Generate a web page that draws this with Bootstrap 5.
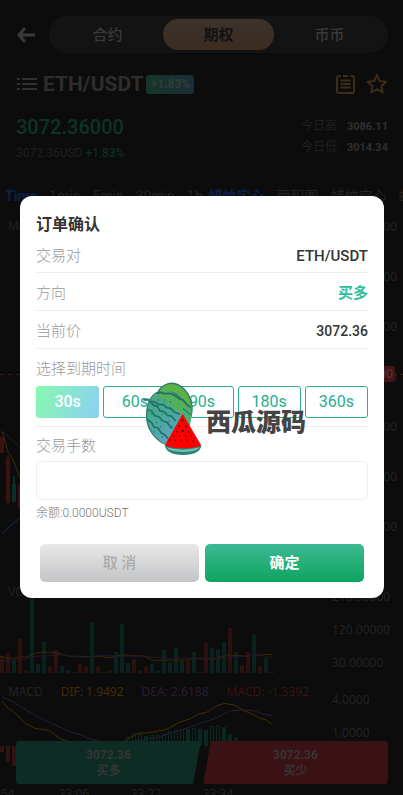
<!DOCTYPE html>
<html lang="zh-CN">
<head>
<meta charset="utf-8">
<meta name="viewport" content="width=device-width, initial-scale=1">
<title>ETH/USDT</title>
<link href="https://cdn.jsdelivr.net/npm/bootstrap@5.3.0/dist/css/bootstrap.min.css" rel="stylesheet">
<style>
body{background:#0c0c0c;color:#2b2b2b;font-family:Roboto,"Noto Sans CJK SC",sans-serif;font-size:12px;line-height:20px}
.page{height:100vh;overflow:hidden}
button{border:0;padding:0}
.top-bar{padding:16px 15px 0 16px}
.back{width:33px;background:none;text-align:left}
.seg{background:#131313;border-radius:19px;padding:3px}
.seg button{height:31px;border-radius:16px;background:none;color:#393939;font-size:15px;font-weight:500}
.seg .on{background:linear-gradient(#3b332d,#3c2c20);color:#111;font-weight:700}
.pair{padding:16px 15px 0 16px;height:46px}
.pair h1{font-size:21px;line-height:28px;font-weight:700;color:#2d2d2d;margin:0 3px 0 6px}
.chg{font-weight:700;color:#2f3d38;background:linear-gradient(90deg,#16362a,#1a2c36);border-radius:3px;width:48px;line-height:19px;text-align:center}
.quote{padding:16px 15px 0 16px;height:87px}
.big{font-size:20px;line-height:24px;font-weight:500;color:#0c3328}
.dimmer{color:#202020}
.up{color:#0c3328}
.hl{padding-top:1px}
.hl b{font-size:11px;color:#303030;margin-left:10px}
.frames{padding-left:5px;gap:6px;font-size:14px;color:#242424;white-space:nowrap;overflow:hidden}
.frames div{gap:12px}
.frames a{color:inherit;text-decoration:none}
.frames .sel{color:#0a2146}
.panel{display:grid;font-family:"Noto Sans",sans-serif;color:#232323;overflow:hidden;position:relative}
.panel>svg,.legend,.axis{grid-area:1/1}
.panel>svg{width:100%;height:100%}
.legend{padding-left:8px;gap:16px;font-size:12px;align-self:start}
.axis{justify-self:end;width:71px;line-height:33px}
.main-p{height:374px}.main-p .legend{padding-top:10px}
.main-p .axis{line-height:50px;margin-top:-4px}
.vol-p{height:100px}.vol-p .legend{padding-top:2px}
.macd-p{height:105px}.macd-p .legend{padding-top:2px;gap:18px}.macd-p .axis{padding-top:3px}
.dif{color:#432b05}.dea{color:#291b35}.hist{color:#371313}
.tag{position:absolute;right:8px;top:160px;background:#441313;color:#494040;line-height:16px;border-radius:2px;padding:0 2px}
.times{font-family:"Noto Sans",sans-serif;line-height:17px;color:#232323}
.times span{width:72px;flex:none;text-align:center}
.times span:first-child{width:54px;margin-left:-16px;text-align:left}
.trade{padding:0 15px 11px 16px;gap:2px}
.trade button{height:43px;line-height:16px;font-weight:700;color:#353535;border-radius:3px;flex:1}
.buy{background:#0c2c24;clip-path:polygon(0 0,100% 0,calc(100% - 8px) 100%,0 100%)}
.sell{background:#3a1115;clip-path:polygon(8px 0,100% 0,100% 100%,0 100%)}
.overlay{padding:0 19px 1px 20px;z-index:5}
.sheet{background:#fff;border-radius:12px;padding:16px;color:#999;font-size:15px}
.sheet h2{font-size:16px;line-height:26px;font-weight:700;color:#333;margin:0}
.sheet label,.lbl{font-weight:300;color:#999}
.line{height:38px;border-bottom:1px solid #eee;padding-top:2px}
.line.first{height:35px}
.line b{font-weight:500;color:#333}
.line .num{font-size:14px}
.line .long{color:#2ebd99;font-weight:700}
.pick{line-height:21px;padding:10px 0 6px}
.terms{gap:4px;padding-bottom:8px;border-bottom:1px solid #eee}
.terms button{flex:1;height:32px;border:1px solid #2aae8c;border-radius:3px;background:#fff;color:#2aae8c;font-size:16px}
.terms .on{border-color:transparent;background:linear-gradient(110deg,#87f9b0,#8bd0f3) border-box;color:#fff;font-weight:500}
.sheet label{line-height:22px}
.sheet .lots{height:39px;border:1px solid #eee;border-radius:6px}
.bal{font-size:12px;line-height:26px;color:#777;font-weight:300}
.acts{gap:6px;padding:18px 4px 0}
.acts button{flex:1;height:38px;border-radius:5px;font-weight:500}
.no{background:linear-gradient(#e8e8e8,#c3c4c6);color:#aaa}
.yes{background:linear-gradient(#3dba94,#0ea45f);color:#fff}
.acts .yes{font-weight:700}
.brand-mark{position:absolute;left:120px;top:180px;pointer-events:none;color:#444;font:900 25px/30px "Noto Sans CJK SC",sans-serif}
.brand-mark span{padding-top:3px}
</style>
<script src="https://cdn.jsdelivr.net/npm/bootstrap@5.3.0/dist/js/bootstrap.bundle.min.js"></script>
</head>
<body>
<main class="page d-flex flex-column">
  <header class="top-bar d-flex align-items-center flex-shrink-0">
    <button class="back" aria-label="返回"><svg class="d-block" width="20" height="18" fill="none" stroke="#393939" stroke-width="3"><path d="M9 2 3 9l6 7M2 9h17"/></svg></button>
    <nav class="seg d-flex flex-grow-1"><button class="w-100">合约</button><button class="on w-100">期权</button><button class="w-100">币币</button></nav>
  </header>
  <section class="pair d-flex align-items-center flex-shrink-0">
    <svg width="21" height="16" stroke="#303030" stroke-width="2"><path d="M6 3h15M6 8h15M6 13h15M1 3h3M1 8h3M1 13h3"/></svg>
    <h1>ETH/USDT</h1><span class="chg">+1.83%</span>
    <svg class="ms-auto" width="19" height="20" fill="none" stroke="#3b2d18" stroke-width="2"><path d="M5 2H3Q1 2 1 4v13q0 2 2 2h13q2 0 2-2V4q0-2-2-2h-2M7 2h5M4.500 6.500h10M4.500 10h10M4.500 13.500h10"/></svg>
    <svg class="ms-2" width="25" height="22" fill="none" stroke="#3b2d18" stroke-width="2" stroke-linejoin="round"><path d="m14 2 2.700 6 6.300.700-4.600 4.500 1.300 6.300-5.700-3.200-5.700 3.200 1.300-6.300L4.700 8.700 11.300 8z"/></svg>
  </section>
  <section class="quote d-flex justify-content-between flex-shrink-0">
    <div><div class="big">3072.36000</div><div class="pt-1"><span class="dimmer">3072.36USD</span> <span class="up">+1.83%</span></div></div>
    <div class="hl dimmer"><div>今日高<b>3086.11</b></div><div>今日低<b>3014.34</b></div></div>
  </section>
  <nav class="frames d-flex flex-shrink-0"><div class="d-flex"><a href="#" class="sel fw-bold">Time</a><a href="#">1min</a><a href="#">5min</a><a href="#">30min</a><a href="#">1h</a></div><div class="d-flex"><a href="#" class="sel fw-bold">蜡烛实心</a><a href="#">面积图</a><a href="#">蜡烛空心</a><a href="#">蜡烛</a></div></nav>
  <section class="panel main-p flex-shrink-0">
    <svg fill="none"><path d="M0 168.500h403" stroke="#431515" stroke-dasharray="4 4"/>
      <path d="M0 231h4v16H0zM6 252h4v44H6zM7 250h2v48H7zM18 278h4v25h-4z" fill="#3a1212"/><path d="M12 278h4v18h-4zM13 270h2v9h-2z" fill="#0b2e28"/>
      <path d="m2 225 6 21 5 8 8 20" stroke="#432b05"/><path d="m2 225 20 18" stroke="#25183a"/><path d="m2 328 8-8 12-10" stroke="#102c4a"/></svg>
    <div class="legend">MA</div>
    <div class="axis"><div>3090.00000</div><div>3085.00000</div><div>3080.00000</div><div>3075.00000</div><div>3070.00000</div><div>3065.00000</div><div>3060.00000</div></div>
    <span class="tag">3072.36000</span>
  </section>
  <section class="panel vol-p flex-shrink-0">
    <svg fill="none">
      <path stroke="#2d1111" stroke-width="4" d="M2 93v-17M8 93v-20M20 93v-34M26 93v-2M50 93v-7M56 93v-23M80 93v-9M86 93v-7M98 93v-6M110 93v-2M134 93v-14M140 93v-2M146 93v-6M188 93v-12M206 93v-30M230 93v-45M242 93v-8M248 93v-21M260 93v-7M272 93v-1"/>
      <path stroke="#0a221d" stroke-width="4" d="M14 93v-13M32 93V0M38 93v-9M44 93v-31M62 93v-7M68 93v-3M74 93v-1M92 93v-51M104 93v-1M116 93v-21M122 93v-49M128 93v-10M152 93v-9M158 93v-2M164 93v-23M170 93v-11M176 93v-25M182 93v-12M194 93v-21M200 93v-1M212 93v-25M218 93v-24M224 93v-31M236 93v-21M254 93v-38M266 93v-15"/>
      <g transform="translate(0 10) scale(.3333)" stroke-width="3"><path stroke="#392605" d="M0 198 24 205H45L60 200 80 202 96 193 120 187H165L205 198 260 200 300 199 330 203 365 195 430 198 457 211 555 210 585 206 640 207 690 194 735 199 775 195 818 193"/><path stroke="#22172e" d="M0 214 75 208 100 200 130 198 190 194 205 199 260 202 300 195 350 199 420 198 500 205 560 203 640 207 700 201 780 195 818 203"/></g></svg>
    <div class="legend">VOL</div>
    <div class="axis"><div>210.00000</div><div>120.00000</div><div>30.00000</div></div>
  </section>
  <section class="panel macd-p flex-shrink-0">
    <svg fill="none"><path fill="#321212" d="M0 66h4v6H0zM6 66h4v16H6zM12 66h4v20h-4z"/>
      <path stroke="#0a2822" d="M126.500 66v-9h3v9M132.500 66V53.500h3V66M138.500 66V54.500h3V66M150.500 66V55.500h3V66M156.500 66V55.500h3V66M162.500 66V54.500h3V66M168.500 66V51.500h3V66M174.500 66V50.500h3V66M180.500 66V49.500h3V66M192.500 66V48.500h3V66M210.500 66V46.500h3V66M216.500 66V45.500h3V66"/>
      <path stroke="#0a2822" stroke-width="4" d="M146 66V56M188 66V49M200 66V49M206 66V50M224 66V47M230 66V54M236 66V58"/>
      <g transform="scale(.3333)" stroke-width="3"><path stroke="#432b05" d="M7 64 25 86 40 95 78 131 105 145 145 151 155 156 180 176 220 189H365L385 176 415 160 450 158 500 148 540 126 570 117 595 102 620 97 650 77 675 70 705 76 735 93 765 106 780 115 797 119 818 133"/><path stroke="#291b35" d="M7 50 45 69 80 91 130 119 210 155 240 164 270 177 310 186 400 184 470 173 550 148 640 117 690 93 720 90 760 92 785 100 818 108"/></g></svg>
    <div class="legend d-flex"><span>MACD</span><span class="dif">DIF: 1.9492</span><span class="dea">DEA: 2.6188</span><span class="hist">MACD: -1.3392</span></div>
    <div class="axis"><div>4.0000</div><div>1.0000</div></div>
  </section>
  <div class="times d-flex flex-shrink-0"><span>22:54</span><span>23:06</span><span>23:22</span><span>23:34</span></div>
</main>
<footer class="trade d-flex fixed-bottom"><button class="buy">3072.36<br>买多</button><button class="sell">3072.36<br>买少</button></footer>

<div class="overlay position-fixed top-0 start-0 w-100 h-100 d-flex align-items-center">
  <form class="sheet position-relative w-100" role="dialog" aria-labelledby="dlg-title">
    <h2 id="dlg-title">订单确认</h2>
    <div class="line first d-flex justify-content-between align-items-center"><span class="lbl">交易对</span><b>ETH/USDT</b></div>
    <div class="line d-flex justify-content-between align-items-center"><span class="lbl">方向</span><b class="long">买多</b></div>
    <div class="line d-flex justify-content-between align-items-center"><span class="lbl">当前价</span><b class="num">3072.36</b></div>
    <div class="lbl pick">选择到期时间</div>
    <div class="terms d-flex"><button type="button" class="on">30s</button><button type="button">60s</button><button type="button">90s</button><button type="button">180s</button><button type="button">360s</button></div>
    <label for="lots" class="d-block pt-2 pb-1">交易手数</label>
    <input id="lots" class="lots form-control shadow-none">
    <div class="bal">余额:0.0000USDT</div>
    <div class="acts d-flex"><button type="button" class="no">取 消</button><button type="button" class="yes">确定</button></div>
    <div class="brand-mark d-flex align-items-center">
      <svg width="66" height="84" viewBox="0 0 198 252" fill="none">
        <defs><linearGradient id="rind" x1="0" y1="0" x2=".4" y2="1"><stop stop-color="#48a879"/><stop offset=".5" stop-color="#44aa94"/><stop offset="1" stop-color="#5aa5c2"/></linearGradient></defs>
        <ellipse cx="101" cy="90" rx="54" ry="69" transform="rotate(-15 101 90)" fill="#5bb047" stroke="#2b7d70" stroke-width="4"/>
        <path d="M112 120q20-35 39-30 8 30-3 62z" fill="#4eaf70"/>
        <g stroke="#2b7d70" stroke-width="4"><path d="M50 51q45-12 65 9t37 36M50 64q45-5 70 26l32 26"/></g>
        <path d="M31 72Q48 46 74 48q36 10 54 65l-40 92q-40-6-62-48-17-45 5-85z" fill="url(#rind)"/>
        <path d="M49 54Q90 20 130 92l-6 24z" fill="#50b05c"/>
        <path d="M50 50Q32 61 24 85q-10 35 3 71 20 40 53 50" stroke="#2b7d70" stroke-width="4"/>
        <g stroke="#246d68" stroke-width="5" stroke-linejoin="round"><path d="m49 52 14-3 8 4 18-1 18 8 10 8 13 4 12 16 8 4M29 76l16 2 10 7 15 1 10 9 12 2 9 10 18 8M29 76l13 13 10 2 7 13 15 4 8 10 12 2 14 15M23 101l12 4 9 14 14 4 8 11 15 5 9 12 8 4M20 130l14 9 8 14 12 3 9 14 12 7 9 11"/></g>
        <path d="m55 70 1 5m17-5 1 5m17 1 1 5M35 111l1 5m13 20 1 5m18-29 1 5m18 17 1 5M62 150l1 5m-22 10 1 5m25 10 1 5m24-31 1 5" stroke="#246d68" stroke-width="3"/>
        <path d="M34 78 24 71H10" stroke="#2b7d70" stroke-width="7"/>
        <path d="M74 207q55 12 110 0-2 29-55 30-51-1-55-30z" fill="#2f8078"/><path d="M79 214q49 14 100 0-5 12-50 14-44-2-50-14z" fill="#75c0b2"/>
        <path d="M128 113 183 207q-5 9-54 10-48-1-54-10z" fill="#f00"/>
        <path d="M128 130v6m-10 11v6m20-5v6m-27 10v6m17-8v6m18-4v6m-45 8v6m18-7v6m17-6v6m18-7v6m-65 8v6m17-6v6m18-5v6m18-6v6m18-6v6" stroke="#4c080a" stroke-width="4"/>
      </svg><span>西瓜源码</span>
    </div>
  </form>
</div>
</body>
</html>
